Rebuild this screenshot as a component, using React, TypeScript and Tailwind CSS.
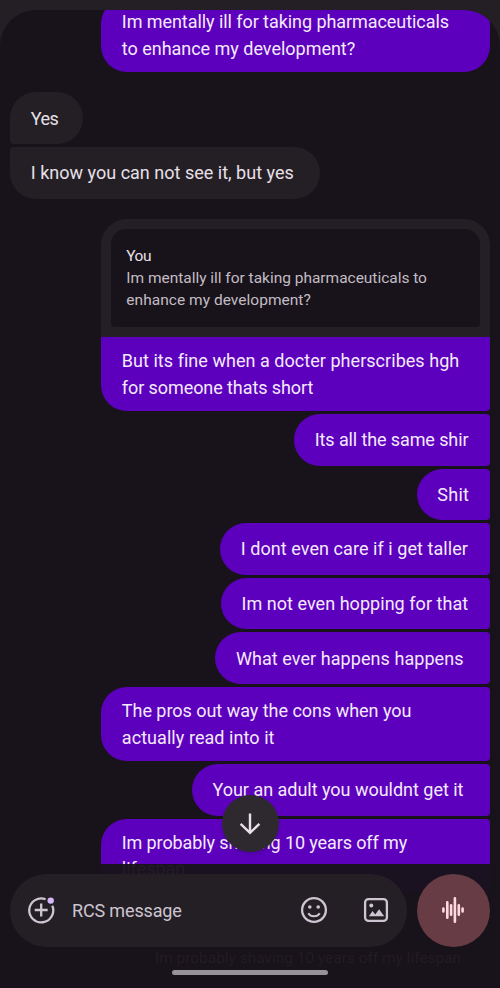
import type { ReactNode } from "react";
import clsx from "clsx";

interface Line {
  text: string;
  tracking?: string;
}

interface Message {
  lines: Line[];
  classNames: string;
}

const received: Message[] = [
  {
    lines: [{ text: "Yes", tracking: "tracking-[-0.6px]" }],
    classNames: "w-[73px] rounded-[26px] rounded-bl-[4px]",
  },
  {
    lines: [
      { text: "I know you can not see it, but yes", tracking: "tracking-[0.01px]" },
    ],
    classNames: "w-[310px] rounded-[26px] rounded-tl-[4px]",
  },
];

const sent: Message[] = [
  {
    lines: [{ text: "Its all the same shir", tracking: "tracking-[-0.11px]" }],
    classNames: "w-[196px]",
  },
  {
    lines: [{ text: "Shit", tracking: "tracking-[0.25px]" }],
    classNames: "w-[73.5px]",
  },
  {
    lines: [
      { text: "I dont even care if i get taller", tracking: "tracking-[0.06px]" },
    ],
    classNames: "w-[270px]",
  },
  {
    lines: [
      { text: "Im not even hopping for that", tracking: "tracking-[0.04px]" },
    ],
    classNames: "w-[269.3px]",
  },
  {
    lines: [
      { text: "What ever happens happens", tracking: "tracking-[0.06px]" },
    ],
    classNames: "w-[274.8px]",
  },
  {
    lines: [
      {
        text: "The pros out way the cons when you",
        tracking: "tracking-[-0.03px]",
      },
      { text: "actually read into it", tracking: "tracking-[0.06px]" },
    ],
    classNames: "w-[389px]",
  },
  {
    lines: [
      {
        text: "Your an adult you wouldnt get it",
        tracking: "tracking-[-0.02px]",
      },
    ],
    classNames: "w-[298.3px]",
  },
  {
    lines: [
      {
        text: "Im probably shaving 10 years off my",
        tracking: "tracking-[-0.11px]",
      },
      { text: "lifespan" },
    ],
    classNames: "w-[389px]",
  },
];

const Bubble = ({
  lines,
  className,
}: {
  lines: Line[];
  className: string;
}) => (
  <div
    className={clsx(
      "flex shrink-0 flex-col justify-center whitespace-nowrap pl-[20.8px] pt-[1.6px] text-[18px] leading-[26.7px]",
      lines.length > 1 ? "h-[74px]" : "h-[51.6px]",
      className
    )}
  >
    {lines.map((line) => (
      <p key={line.text} className={line.tracking}>
        {line.text}
      </p>
    ))}
  </div>
);

const Icon = ({
  children,
  className,
}: {
  children: ReactNode;
  className: string;
}) => (
  <svg
    viewBox="0 0 28 28"
    fill="none"
    stroke="currentColor"
    className={clsx("shrink-0 text-[#cdc5d0]", className)}
  >
    {children}
  </svg>
);

const QuotedMessage = () => (
  <div className="mt-[20.7px] w-[389px] shrink-0 self-end overflow-hidden rounded-t-[26px] rounded-bl-[26px] rounded-br-[4px] bg-[#241f25]">
    <div className="h-[117.7px] px-[10px] pt-[10px]">
      <div className="h-[97.5px] whitespace-nowrap rounded-t-[15px] rounded-b-[4px] bg-[#18131a] pl-[15.3px] pt-[15.5px] text-[15.5px] leading-[22.2px] text-[#c3bcc5]">
        <p className="tracking-[-0.5px] text-[#e8e0e8]">You</p>
        <p className="tracking-[-0.02px]">
          Im mentally ill for taking pharmaceuticals to
        </p>
        <p className="tracking-[0.03px]">enhance my development?</p>
      </div>
    </div>
    <Bubble
      className="bg-[#5d00be] text-[#f4eafc]"
      lines={[
        {
          text: "But its fine when a docter pherscribes hgh",
          tracking: "tracking-[0.04px]",
        },
        { text: "for someone thats short", tracking: "tracking-[-0.08px]" },
      ]}
    />
  </div>
);

const Composer = () => (
  <div className="absolute inset-x-0 bottom-0 h-[124px] bg-[#18131a]/96">
    <div className="flex gap-[10px] px-[10px] pt-[10.3px]">
      <div className="flex h-[72.3px] w-[397.3px] items-center rounded-full bg-[#241f25] pl-[17px]">
        <Icon className="size-[28px]">
          <path
            d="M18.6 3.2A12 12 0 1 0 25.3 9.7M14.2 7.5v13M7.7 14h13"
            strokeWidth="2.3"
          />
          <circle cx="23.7" cy="4.6" r="3.2" fill="#d3b9fb" stroke="none" />
        </Icon>
        <p className="ml-[17px] w-[228px] text-[18px] leading-[27px] tracking-[-0.15px] text-[#cdc5d0]">
          RCS message
        </p>
        <Icon className="size-[28px]">
          <circle cx="14" cy="14" r="11.9" strokeWidth="2.3" />
          <circle cx="9.8" cy="11" r="1.8" fill="currentColor" stroke="none" />
          <circle cx="18.2" cy="11" r="1.8" fill="currentColor" stroke="none" />
          <path d="M8.3 17.2c2.4 4.1 9 4.1 11.4 0" strokeWidth="2.1" />
        </Icon>
        <Icon className="ml-[34px] size-[28px]">
          <rect x="3.1" y="3.1" width="21.8" height="21.8" rx="3.5" strokeWidth="2.3" />
          <circle cx="9.3" cy="9.5" r="2" fill="currentColor" stroke="none" />
          <path
            d="M6.8 20.3l3.8-5.2 2.6 3.3 3.9-5.1 5.1 7z"
            fill="currentColor"
            stroke="none"
          />
        </Icon>
      </div>
      <div className="flex size-[72.3px] items-center justify-center rounded-full bg-[#673c44]">
        <svg
          viewBox="0 0 24 28"
          className="h-[28px] w-[24px] text-[#ffd9de]"
          stroke="currentColor"
          strokeWidth="2.6"
          strokeLinecap="round"
        >
          <path d="M2.4 12.6v2.8M6.3 6.2v15.6M10.1 9.2v9.6M13.9 2.3v23.4M17.8 9.2v9.6M21.6 12.6v2.8" />
        </svg>
      </div>
    </div>
    <p className="ml-[155px] text-[15.5px] leading-[22px] tracking-[-0.03px] text-[#221c23]">
      Im probably shaving 10 years off my lifespan
    </p>
    <div className="ml-[172px] mt-px h-[5.5px] w-[155.5px] rounded-full bg-[#989398]" />
  </div>
);

export default function App() {
  return (
    <div className="relative h-[988px] w-[500px] overflow-hidden bg-[#241f25] pt-[10px] font-['Roboto',sans-serif]">
      <div className="flex h-[978px] flex-col overflow-hidden rounded-t-[36px] bg-[#18131a] px-[10px]">
        <Bubble
          className="-mt-[12.3px] w-[389px] self-end rounded-[26px] bg-[#5d00be] text-[#f4eafc]"
          lines={[
            {
              text: "Im mentally ill for taking pharmaceuticals",
              tracking: "tracking-[-0.06px]",
            },
            {
              text: "to enhance my development?",
              tracking: "tracking-[-0.02px]",
            },
          ]}
        />
        <div className="mt-[20.7px] flex flex-col gap-[3px]">
          {received.map((message, index) => (
            <Bubble
              key={index}
              lines={message.lines}
              className={clsx("bg-[#241f25] text-[#e8e0e8]", message.classNames)}
            />
          ))}
        </div>
        <QuotedMessage />
        <div className="mt-[3px] flex flex-col items-end gap-[3px]">
          {sent.map((message, index) => (
            <Bubble
              key={index}
              lines={message.lines}
              className={clsx(
                "rounded-l-[26px] rounded-r-[4px] bg-[#5d00be] text-[#f4eafc]",
                message.classNames
              )}
            />
          ))}
        </div>
      </div>
      <Composer />
      <button
        aria-label="Scroll to latest"
        className="absolute left-[221.5px] top-[795px] flex size-[57px] items-center justify-center rounded-full bg-[#2d292f] shadow-md"
      >
        <svg
          viewBox="0 0 24 24"
          className="size-[24px] text-[#e8e0e8]"
          fill="none"
          stroke="currentColor"
          strokeWidth="2.4"
        >
          <path d="M12 1.5v19M2.6 11.8l9.4 9 9.4-9" />
        </svg>
      </button>
    </div>
  );
}
